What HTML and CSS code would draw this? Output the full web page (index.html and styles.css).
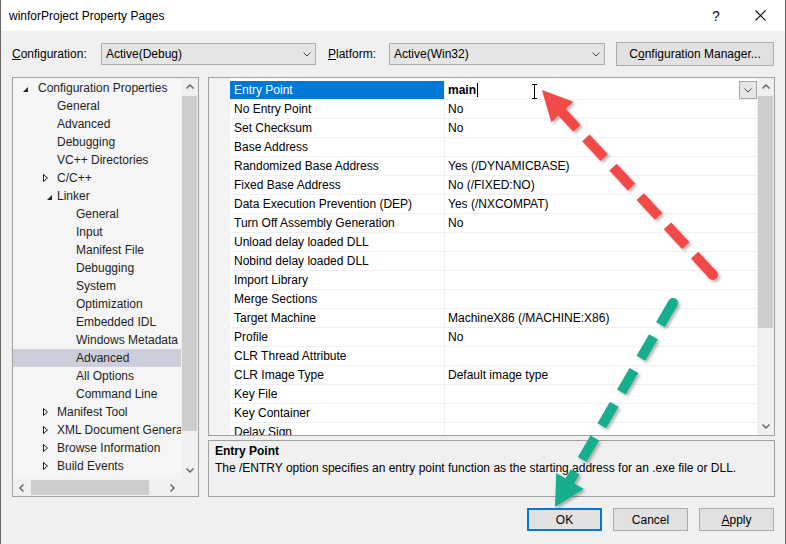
FILE: index.html
```html
<!DOCTYPE html>
<html>
<head>
<meta charset="utf-8">
<title>winforProject Property Pages</title>
<link rel="stylesheet" href="styles.css">
</head>
<body>
<div class="window">
  <div class="titlebar">
    <span class="title">winforProject Property Pages</span>
    <span class="tb-btn help">?</span>
    <span class="tb-btn close"><svg width="11" height="11" viewBox="0 0 11 11"><path d="M0.5 0.5L10.5 10.5M10.5 0.5L0.5 10.5" stroke="#111" stroke-width="1.1" fill="none"/></svg></span>
  </div>

  <div class="toolbar">
    <span class="lbl lbl-config"><u>C</u>onfiguration:</span>
    <div class="combo combo-config"><span>Active(Debug)</span><svg class="chev" width="8" height="5" viewBox="0 0 8 5"><path d="M0.5 0.5L4 4L7.5 0.5" stroke="#444" fill="none"/></svg></div>
    <span class="lbl lbl-platform"><u>P</u>latform:</span>
    <div class="combo combo-platform"><span>Active(Win32)</span><svg class="chev" width="8" height="5" viewBox="0 0 8 5"><path d="M0.5 0.5L4 4L7.5 0.5" stroke="#444" fill="none"/></svg></div>
    <button class="btn btn-manager">C<u>o</u>nfiguration Manager...</button>
  </div>

  <div class="main">
    <div class="tree">
      <ul class="tree-list">
        <li class="r-cp"><svg class="tw tw-exp" width="5" height="5" viewBox="0 0 5 5"><path d="M5 0V5H0Z"/></svg><span>Configuration Properties</span></li>
        <li class="r-l1"><span>General</span></li>
        <li class="r-l1"><span>Advanced</span></li>
        <li class="r-l1"><span>Debugging</span></li>
        <li class="r-l1"><span>VC++ Directories</span></li>
        <li class="r-col1"><svg class="tw" width="5" height="8" viewBox="0 0 5 8"><path d="M0.5 0.5L4.5 4L0.5 7.5Z" fill="none" stroke="#1e1e1e"/></svg><span>C/C++</span></li>
        <li class="r-exp1"><svg class="tw tw-exp" width="5" height="5" viewBox="0 0 5 5"><path d="M5 0V5H0Z"/></svg><span>Linker</span></li>
        <li class="r-l2"><span>General</span></li>
        <li class="r-l2"><span>Input</span></li>
        <li class="r-l2"><span>Manifest File</span></li>
        <li class="r-l2"><span>Debugging</span></li>
        <li class="r-l2"><span>System</span></li>
        <li class="r-l2"><span>Optimization</span></li>
        <li class="r-l2"><span>Embedded IDL</span></li>
        <li class="r-l2"><span>Windows Metadata</span></li>
        <li class="r-l2 sel"><span>Advanced</span></li>
        <li class="r-l2"><span>All Options</span></li>
        <li class="r-l2"><span>Command Line</span></li>
        <li class="r-col1"><svg class="tw" width="5" height="8" viewBox="0 0 5 8"><path d="M0.5 0.5L4.5 4L0.5 7.5Z" fill="none" stroke="#1e1e1e"/></svg><span>Manifest Tool</span></li>
        <li class="r-col1"><svg class="tw" width="5" height="8" viewBox="0 0 5 8"><path d="M0.5 0.5L4.5 4L0.5 7.5Z" fill="none" stroke="#1e1e1e"/></svg><span>XML Document Generator</span></li>
        <li class="r-col1"><svg class="tw" width="5" height="8" viewBox="0 0 5 8"><path d="M0.5 0.5L4.5 4L0.5 7.5Z" fill="none" stroke="#1e1e1e"/></svg><span>Browse Information</span></li>
        <li class="r-col1"><svg class="tw" width="5" height="8" viewBox="0 0 5 8"><path d="M0.5 0.5L4.5 4L0.5 7.5Z" fill="none" stroke="#1e1e1e"/></svg><span>Build Events</span></li>
      </ul>
      <div class="vscroll tree-vscroll">
        <div class="sb-btn"><svg width="8" height="5" viewBox="0 0 8 5"><path d="M0.5 4.5L4 1L7.5 4.5" stroke="#606060" stroke-width="1.4" fill="none"/></svg></div>
        <div class="thumb-v tree-thumb"></div>
        <div class="sb-fill"></div>
        <div class="sb-btn"><svg width="8" height="5" viewBox="0 0 8 5"><path d="M0.5 0.5L4 4L7.5 0.5" stroke="#606060" stroke-width="1.4" fill="none"/></svg></div>
      </div>
      <div class="hscroll">
        <div class="sb-btn"><svg width="5" height="8" viewBox="0 0 5 8"><path d="M4.5 0.5L1 4L4.5 7.5" stroke="#606060" stroke-width="1.4" fill="none"/></svg></div>
        <div class="thumb-h"></div>
        <div class="sb-fill"></div>
        <div class="sb-btn"><svg width="5" height="8" viewBox="0 0 5 8"><path d="M0.5 0.5L4 4L0.5 7.5" stroke="#606060" stroke-width="1.4" fill="none"/></svg></div>
      </div>
      <div class="corner"></div>
    </div>

    <div class="right">
      <div class="grid">
        <div class="gutter"></div>
        <div class="rows">
          <div class="row"><div class="name selected">Entry Point</div><div class="value"><b>main</b><span class="caret"></span><span class="dd"><svg width="8" height="5" viewBox="0 0 8 5"><path d="M0.5 0.5L4 4L7.5 0.5" stroke="#444" fill="none"/></svg></span></div></div>
          <div class="row"><div class="name">No Entry Point</div><div class="value">No</div></div>
          <div class="row"><div class="name">Set Checksum</div><div class="value">No</div></div>
          <div class="row"><div class="name">Base Address</div><div class="value"></div></div>
          <div class="row"><div class="name">Randomized Base Address</div><div class="value">Yes (/DYNAMICBASE)</div></div>
          <div class="row"><div class="name">Fixed Base Address</div><div class="value">No (/FIXED:NO)</div></div>
          <div class="row"><div class="name">Data Execution Prevention (DEP)</div><div class="value">Yes (/NXCOMPAT)</div></div>
          <div class="row"><div class="name">Turn Off Assembly Generation</div><div class="value">No</div></div>
          <div class="row"><div class="name">Unload delay loaded DLL</div><div class="value"></div></div>
          <div class="row"><div class="name">Nobind delay loaded DLL</div><div class="value"></div></div>
          <div class="row"><div class="name">Import Library</div><div class="value"></div></div>
          <div class="row"><div class="name">Merge Sections</div><div class="value"></div></div>
          <div class="row"><div class="name">Target Machine</div><div class="value">MachineX86 (/MACHINE:X86)</div></div>
          <div class="row"><div class="name">Profile</div><div class="value">No</div></div>
          <div class="row"><div class="name">CLR Thread Attribute</div><div class="value"></div></div>
          <div class="row"><div class="name">CLR Image Type</div><div class="value">Default image type</div></div>
          <div class="row"><div class="name">Key File</div><div class="value"></div></div>
          <div class="row"><div class="name">Key Container</div><div class="value"></div></div>
          <div class="row"><div class="name">Delay Sign</div><div class="value"></div></div>
        </div>
        <div class="vscroll grid-vscroll">
          <div class="sb-btn"><svg width="8" height="5" viewBox="0 0 8 5"><path d="M0.5 4.5L4 1L7.5 4.5" stroke="#606060" stroke-width="1.4" fill="none"/></svg></div>
          <div class="thumb-v grid-thumb"></div>
          <div class="sb-fill"></div>
          <div class="sb-btn"><svg width="8" height="5" viewBox="0 0 8 5"><path d="M0.5 0.5L4 4L7.5 0.5" stroke="#606060" stroke-width="1.4" fill="none"/></svg></div>
        </div>
      </div>
      <div class="desc">
        <div class="desc-title">Entry Point</div>
        <div class="desc-text">The /ENTRY option specifies an entry point function as the starting address for an .exe file or DLL.</div>
      </div>
    </div>
  </div>

  <div class="footer">
    <button class="btn btn-ok">OK</button>
    <button class="btn">Cancel</button>
    <button class="btn"><u>A</u>pply</button>
  </div>

  <svg class="overlay" width="786" height="544" viewBox="0 0 786 544">
    <defs>
      <filter id="sh" x="-20%" y="-20%" width="140%" height="140%">
        <feDropShadow dx="2" dy="2" stdDeviation="1.5" flood-color="#000" flood-opacity="0.3"/>
      </filter>
    </defs>
    <path d="M532 84.5H537M534.5 84.5V98.5M532 98.5H537" stroke="#000" stroke-width="1" fill="none"/>
    <g filter="url(#sh)" fill="#f24848">
      <path d="M713 275L560 110" stroke="#f24848" stroke-width="10" stroke-dasharray="27 13" fill="none"/>
      <circle cx="713" cy="275" r="5"/>
      <polygon points="542,90 573.3,101.8 551.3,122.2"/>
    </g>
    <g filter="url(#sh)" fill="#12ae8c">
      <path d="M673 303L568 484" stroke="#12ae8c" stroke-width="10" stroke-dasharray="25 14" fill="none"/>
      <circle cx="673" cy="303" r="5"/>
      <polygon points="555,507 583.8,489 556.2,473"/>
    </g>
  </svg>
</div>
</body>
</html>
```
FILE: styles.css
```css
* { box-sizing: border-box; }
html, body { margin: 0; padding: 0; }
body {
  width: 786px;
  height: 544px;
  overflow: hidden;
  background: #f0f0f0;
  font-family: "Liberation Sans", Arial, sans-serif;
  font-size: 12px;
  color: #000;
}
.window {
  position: relative;
  width: 786px;
  height: 544px;
  display: flex;
  flex-direction: column;
  background: #f0f0f0;
}
.window::after {
  content: "";
  position: absolute;
  inset: 0;
  border-left: 1px solid #6a6a6a;
  border-right: 1px solid #6a6a6a;
  pointer-events: none;
}

/* title bar */
.titlebar {
  flex: none;
  height: 31px;
  background: #fff;
  display: flex;
  align-items: center;
  padding-left: 9px;
  padding-right: 4px;
}
.title { flex: 1; }
.tb-btn {
  width: 44px;
  height: 31px;
  display: flex;
  align-items: center;
  justify-content: center;
}
.help { font-size: 14px; color: #111; }

/* toolbar */
.toolbar {
  flex: none;
  display: flex;
  align-items: center;
  height: 24px;
  margin-top: 11px;
  padding-left: 12px;
}
.lbl-config { width: 89px; }
.lbl-platform { width: 61px; margin-left: 12px; }
.combo {
  height: 22px;
  border: 1px solid #adadad;
  background: #e5e5e5;
  display: flex;
  align-items: center;
  justify-content: space-between;
  padding: 0 4px 0 4px;
}
.combo-config { width: 215px; }
.combo-platform { width: 216px; }
.btn {
  font-family: inherit;
  font-size: 12px;
  color: #000;
  background: #e1e1e1;
  border: 1px solid #adadad;
  height: 24px;
  padding: 0;
  margin: 0;
}
.btn-manager { width: 158px; margin-left: 11px; }

/* main area */
.main {
  flex: none;
  display: flex;
  height: 420px;
  margin-top: 11px;
  padding-left: 12px;
}
.tree {
  width: 187px;
  height: 420px;
  border: 1px solid #a0a0a0;
  background: #f5f5f5;
  display: grid;
  grid-template-columns: 1fr 17px;
  grid-template-rows: 1fr 17px;
}
.tree-list {
  list-style: none;
  margin: 0;
  padding: 1px 0 0;
  overflow: hidden;
  min-width: 0;
}
.tree-list li {
  height: 18px;
  display: flex;
  align-items: center;
  white-space: nowrap;
  color: #1e1e1e;
}
.tw { flex: none; }
.tw-exp { fill: #262626; margin-top: 2px; }
.r-cp { padding-left: 10px; }
.r-cp span { margin-left: 10px; }
.r-exp1 { padding-left: 34px; }
.r-exp1 span { margin-left: 5px; }
.r-col1 { padding-left: 30px; }
.r-col1 span { margin-left: 9px; }
.r-l1 { padding-left: 44px; }
.r-l2 { padding-left: 63px; }
.tree-list li.sel { background: #cccedb; }

.vscroll {
  display: flex;
  flex-direction: column;
  background: #f0f0f0;
}
.hscroll {
  display: flex;
  background: #f0f0f0;
}
.sb-btn {
  flex: none;
  width: 17px;
  height: 17px;
  display: flex;
  align-items: center;
  justify-content: center;
}
.sb-fill { flex: 1; }
.thumb-v { flex: none; margin: 1px 1px 0; background: #cdcdcd; }
.tree-thumb { height: 335px; }
.grid-thumb { height: 232px; }
.thumb-h { flex: none; width: 118px; margin: 1px 0 1px 1px; background: #cdcdcd; }
.corner { background: #f0f0f0; }

/* right column */
.right {
  width: 567px;
  margin-left: 9px;
  display: flex;
  flex-direction: column;
}
.grid {
  height: 359px;
  border: 1px solid #a0a0a0;
  background: #fff;
  display: flex;
}
.gutter { width: 21px; flex: none; background: #f3f3f3; }
.rows {
  flex: 1;
  min-width: 0;
  padding-top: 3px;
  overflow: hidden;
}
.row {
  display: grid;
  grid-template-columns: 215px 1fr;
  height: 19px;
  border-bottom: 1px solid #eef0f4;
}
.name {
  padding-left: 4px;
  line-height: 18px;
  border-right: 1px solid #eef0f4;
  white-space: nowrap;
  overflow: hidden;
}
.name.selected { background: #0078d7; color: #fff; }
.value {
  padding-left: 3px;
  line-height: 18px;
  display: flex;
  align-items: center;
  white-space: nowrap;
}
.caret {
  width: 1px;
  height: 14px;
  background: #000;
  margin-left: 1px;
}
.dd {
  margin-left: auto;
  width: 18px;
  height: 18px;
  border: 1px solid #a8a8a8;
  background: #e6e6e6;
  display: flex;
  align-items: center;
  justify-content: center;
}
.grid-vscroll { width: 17px; flex: none; }

.desc {
  height: 57px;
  margin-top: 4px;
  border: 1px solid #a0a0a0;
  background: #f0f0f0;
  padding: 2px 6px;
  line-height: 17px;
}
.desc-title { font-weight: bold; }

/* footer */
.footer {
  flex: none;
  display: flex;
  justify-content: flex-end;
  gap: 11px;
  margin-top: 11px;
  padding-right: 12px;
}
.footer .btn { width: 75px; height: 23px; }
.footer .btn-ok { border: 2px solid #0078d7; }

.overlay {
  position: absolute;
  left: 0;
  top: 0;
  pointer-events: none;
}
```
